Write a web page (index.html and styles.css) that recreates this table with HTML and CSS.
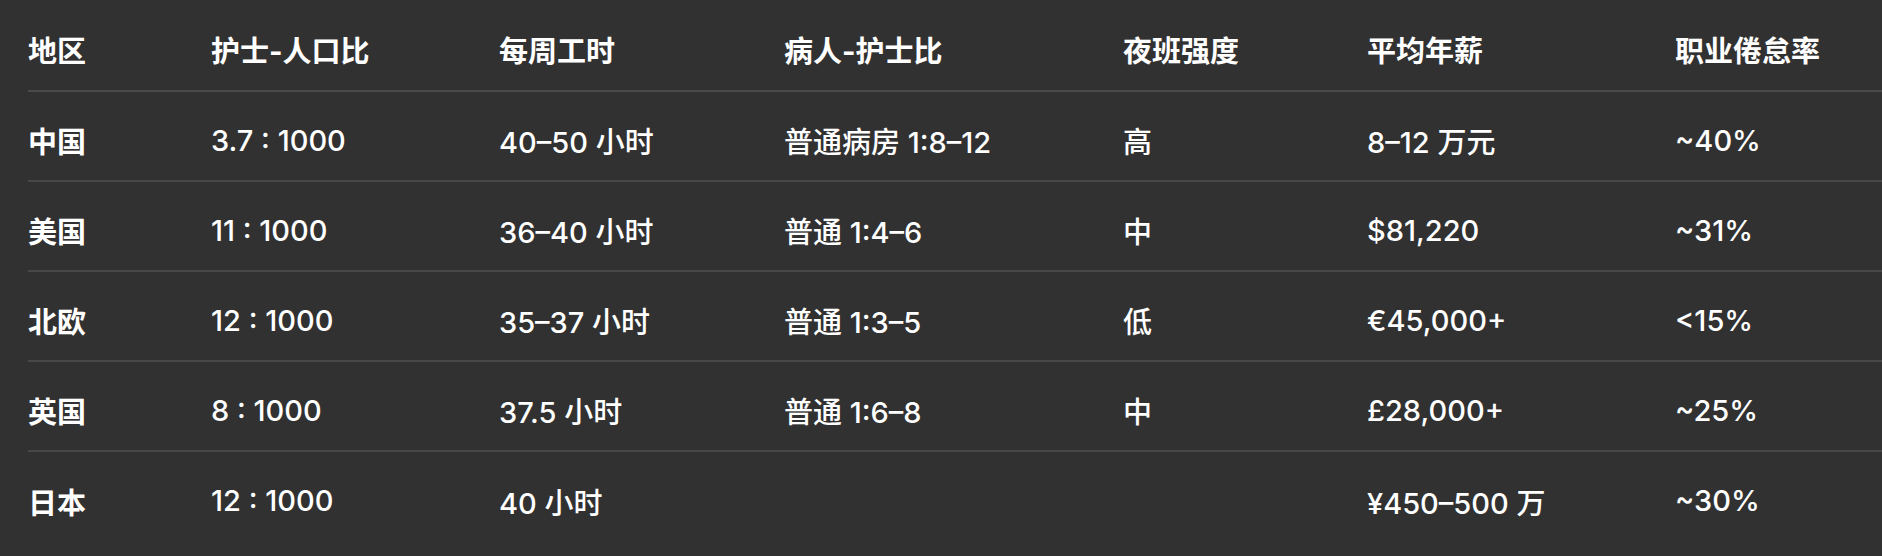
FILE: index.html
```html
<!DOCTYPE html>
<html lang="zh-CN">
<head>
<meta charset="utf-8">
<title>护士工作条件对比</title>
<link rel="stylesheet" href="styles.css">
</head>
<body>
<table class="compare">
  <colgroup>
    <col class="c1"><col class="c2"><col class="c3"><col class="c4"><col class="c5"><col class="c6"><col class="c7">
  </colgroup>
  <thead>
    <tr>
      <th>地区</th><th>护士-人口比</th><th>每周工时</th><th>病人-护士比</th><th>夜班强度</th><th>平均年薪</th><th>职业倦怠率</th>
    </tr>
  </thead>
  <tbody>
    <tr><td class="region">中国</td><td>3.7 : 1000</td><td>40–50 小时</td><td>普通病房 1:8–12</td><td>高</td><td>8–12 万元</td><td>~40%</td></tr>
    <tr><td class="region">美国</td><td>11 : 1000</td><td>36–40 小时</td><td>普通 1:4–6</td><td>中</td><td>$81,220</td><td>~31%</td></tr>
    <tr><td class="region">北欧</td><td>12 : 1000</td><td>35–37 小时</td><td>普通 1:3–5</td><td>低</td><td>€45,000+</td><td>&lt;15%</td></tr>
    <tr><td class="region">英国</td><td>8 : 1000</td><td>37.5 小时</td><td>普通 1:6–8</td><td>中</td><td>£28,000+</td><td>~25%</td></tr>
    <tr class="last"><td class="region">日本</td><td>12 : 1000</td><td>40 小时</td><td></td><td></td><td>¥450–500 万</td><td>~30%</td></tr>
  </tbody>
</table>
</body>
</html>
```

FILE: styles.css
```css
html, body {
  margin: 0;
  padding: 0;
  background: #313131;
}
body {
  color: #ffffff;
  font-family: "Inter", "Noto Sans CJK SC", sans-serif;
  font-size: 29px;
  overflow: hidden;
}
.compare {
  margin-left: 28px;
  width: calc(100% - 28px);
  border-collapse: collapse;
  table-layout: fixed;
}
.c1 { width: 183px; }
.c2 { width: 288px; }
.c3 { width: 285px; }
.c4 { width: 339px; }
.c5 { width: 244px; }
.c6 { width: 308px; }
.c7 { width: auto; }
.compare th {
  text-align: left;
  font-weight: 700;
  height: 91px;
  padding: 8px 0 0 0;
  vertical-align: middle;
  border-bottom: 2px solid #4a4a4a;
  white-space: nowrap;
  box-sizing: border-box;
}
.compare td {
  height: 90px;
  padding: 8px 0 0 0;
  vertical-align: middle;
  border-bottom: 2px solid #484848;
  white-space: nowrap;
  font-weight: 500;
  box-sizing: border-box;
}
.compare td.region {
  font-weight: 700;
}
.compare tr.last td {
  border-bottom: none;
}
```
